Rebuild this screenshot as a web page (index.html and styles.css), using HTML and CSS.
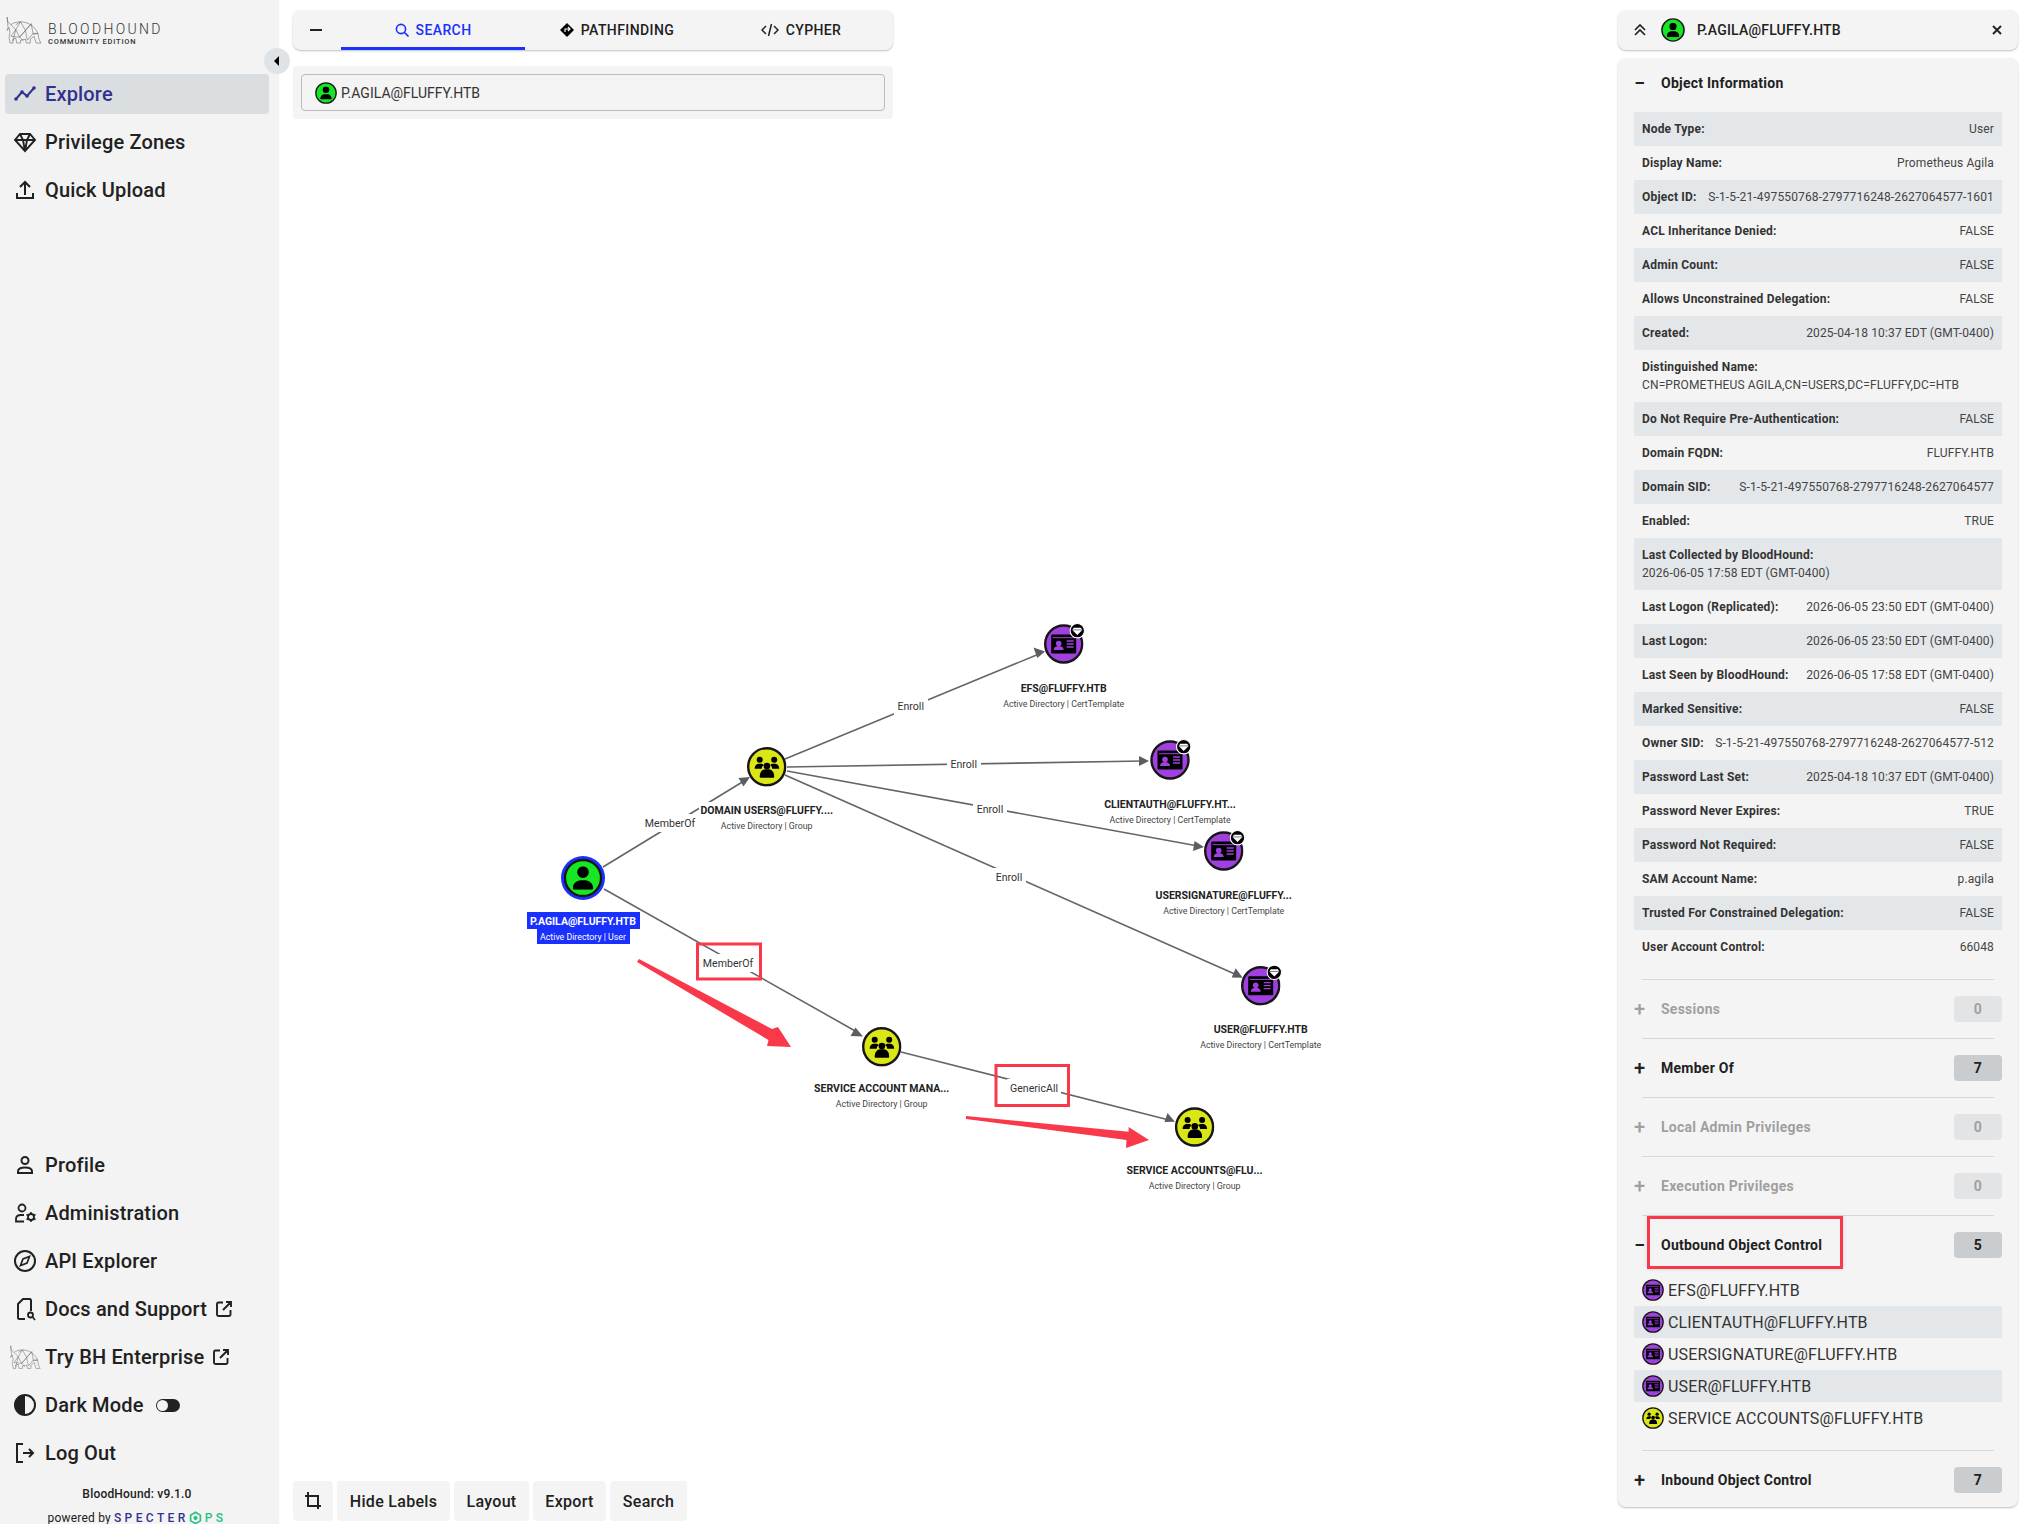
FILE: index.html
```html
<!DOCTYPE html>
<html lang="en">
<head>
    <meta charset="UTF-8">
    <title>BloodHound</title>
    <link rel="stylesheet" href="styles.css">
</head>
<body>
    <svg class="defs" width="0" height="0">
        <defs>
            <symbol id="dog" viewBox="0 0 38 28">
                <g fill="none" stroke="#5c5c5c" stroke-width=".55">
                    <path d="M2 0c0 4 1 6 4 8 2-2 6-3 10-3 8 0 15 5 18 12l1 6 2 4h-5l-2-7-4 3v4h-4l-1-4-5 1v3h-4l-1-5-3 1v4H5l-1-6 1-5-1-5-2 3 1-3z"/>
                    <path d="M6 8l5 5 5-8 5 9 6-7 2 11 5-1M11 13l-5 7 9 1 6-7 2 10 6-7M15 21l-4-8M16 5l-5 3M21 14l-6 7 4 4M27 7l-6 7M34 17l-5 0M8 25l3-12"/>
                </g>
            </symbol>
            <symbol id="person" viewBox="0 0 448 512">
                <path d="M224 256A128 128 0 1 0 224 0a128 128 0 1 0 0 256zm-45.7 48C79.8 304 0 383.8 0 482.3C0 498.7 13.3 512 29.7 512H418.3c16.4 0 29.7-13.3 29.7-29.7C448 383.8 368.2 304 269.7 304H178.3z"/>
            </symbol>
            <symbol id="node-user" viewBox="-20 -20 40 40">
                <circle r="18.5" fill="#17e625" stroke="#161616" stroke-width="2.4"/>
                <use href="#person" x="-10.5" y="-12" width="21" height="24"/>
            </symbol>
            <symbol id="node-group" viewBox="-20 -20 40 40">
                <circle r="18.5" fill="#dbe617" stroke="#161616" stroke-width="2.4"/>
                <circle cx="-7" cy="-7" r="3"/>
                <circle cx="7.5" cy="-7" r="3"/>
                <path d="M-12 2c0-3.500 2-5 4.500-5h2c1 0 2 .5 2.500 1.500-1.500 1-2 2-2 3.500zM12.500 2c0-3.500-2-5-4.500-5h-2c-1 0-2 .5-2.500 1.500 1.500 1 2 2 2 3.500z"/>
                <circle cx=".2" cy="-.6" r="3.300"/>
                <path d="M-7 10c0-5 2.500-7.500 6-7.500h2.500c3.500 0 6 2.500 6 7.500 0 .8-.5 1-1 1h-12.500c-.5 0-1-.2-1-1z"/>
            </symbol>
            <symbol id="node-cert" viewBox="-20 -20 40 40">
                <circle r="18.5" fill="#a040e0" stroke="#161616" stroke-width="2.400"/>
                <rect x="-12.500" y="-9.500" width="25" height="19" rx="1"/>
                <rect x="-11" y="-6.800" width="22" height="1" fill="#a040e0"/>
                <circle cx="-5" cy="-.5" r="2.800" fill="#a040e0"/>
                <path d="M-10 6c0-2.500 2-4 5-4s5 1.500 5 4z" fill="#a040e0"/>
                <path d="M3 -3h7M3 0h7M3 3h7" stroke="#a040e0" stroke-width="1.300"/>
            </symbol>
            <symbol id="gem-badge" viewBox="-8 -8 16 16">
                <circle r="7.200" fill="#000" stroke="#fff" stroke-width="1.100"/>
                <path d="M-3.500-3h7l1.500 2.200-5 5-5-5z" fill="#fff"/>
                <path d="M-5-.8h10" stroke="#000" stroke-width=".5"/>
            </symbol>
            <symbol id="ext" viewBox="0 0 18 18">
                <path d="M8 2.500H3.500a1.500 1.500 0 0 0-1.500 1.500v10.500a1.500 1.500 0 0 0 1.500 1.500H14a1.500 1.500 0 0 0 1.500-1.500V10M11 2h5v5M16 2l-8 8" fill="none" stroke="currentColor" stroke-width="1.900"/>
            </symbol>
        </defs>
    </svg>

    <div class="app">
        <aside class="sidebar">
            <div class="brand">
                <svg class="brand-dog"><use href="#dog"/></svg>
                <div>
                    <div class="brand-name">BLOODHOUND</div>
                    <div class="brand-sub">COMMUNITY EDITION</div>
                </div>
                <button class="collapse"><svg width="8" height="10" viewBox="0 0 8 10"><path d="M6 0v10L1 5z"/></svg></button>
            </div>
            <nav class="nav">
                <a class="nav-item active"><svg class="nav-icon" viewBox="0 0 24 24"><path d="M3 17l6-7 5 4 7-8" fill="none" stroke="currentColor" stroke-width="2"/><circle cx="3" cy="17" r="1.800" fill="currentColor"/><circle cx="9" cy="10" r="1.800" fill="currentColor"/><circle cx="14" cy="14" r="1.800" fill="currentColor"/><circle cx="21" cy="6" r="1.800" fill="currentColor"/></svg>Explore</a>
                <a class="nav-item"><svg class="nav-icon" viewBox="0 0 24 24"><path d="M7 4h10l5 6-10 11L2 10zM2 10h20M7 4l3 6 2 11 2-11 3-6" fill="none" stroke="currentColor" stroke-width="1.900"/></svg>Privilege Zones</a>
                <a class="nav-item"><svg class="nav-icon" viewBox="0 0 24 24"><path d="M12 17V5M7 9l5-5 5 5M4 15v5h16v-5" fill="none" stroke="currentColor" stroke-width="2"/></svg>Quick Upload</a>
            </nav>
            <nav class="nav nav-bottom">
                <a class="nav-item"><svg class="nav-icon" viewBox="0 0 24 24"><circle cx="12" cy="7.500" r="3.500" fill="none" stroke="currentColor" stroke-width="2"/><path d="M5 20v-1.500c0-2.500 3-4 7-4s7 1.500 7 4V20z" fill="none" stroke="currentColor" stroke-width="2"/></svg>Profile</a>
                <a class="nav-item"><svg class="nav-icon" viewBox="0 0 24 24"><circle cx="9" cy="7" r="3.500" fill="none" stroke="currentColor" stroke-width="1.800"/><path d="M11 14H8c-3 0-5 1.500-5 4v2.500h8" fill="none" stroke="currentColor" stroke-width="1.800"/><circle cx="18" cy="16" r="3" fill="none" stroke="currentColor" stroke-width="1.800"/><path d="M18 11v2M18 19v2M13.500 13.500l1.800 1M20.700 17.500l1.800 1M13.500 18.500l1.800-1M20.700 14.500l1.800-1" stroke="currentColor" stroke-width="1.500"/></svg>Administration</a>
                <a class="nav-item"><svg class="nav-icon" viewBox="0 0 24 24"><circle cx="12" cy="12" r="10" fill="none" stroke="currentColor" stroke-width="2"/><path d="M16.500 7.500l-2.500 6.500-6.500 2.500 2.500-6.500z" fill="none" stroke="currentColor" stroke-width="1.700"/></svg>API Explorer</a>
                <a class="nav-item"><svg class="nav-icon" viewBox="0 0 24 24"><path d="M12 22H6.500a1.500 1.500 0 0 1-1.500-1.500V7l5-5h6.500A1.500 1.500 0 0 1 18 3.500V14" fill="none" stroke="currentColor" stroke-width="2"/><circle cx="17.500" cy="18" r="2.500" fill="none" stroke="currentColor" stroke-width="1.800"/><path d="M19.500 20l2.500 3" stroke="currentColor" stroke-width="1.800"/></svg>Docs and Support<svg class="ext"><use href="#ext"/></svg></a>
                <a class="nav-item"><svg class="nav-dog"><use href="#dog"/></svg>Try BH Enterprise<svg class="ext"><use href="#ext"/></svg></a>
                <a class="nav-item"><svg class="nav-icon" viewBox="0 0 24 24"><circle cx="12" cy="12" r="10" fill="none" stroke="currentColor" stroke-width="2"/><path d="M12 2a10 10 0 0 0 0 20z" fill="currentColor"/></svg>Dark Mode<span class="toggle"></span></a>
                <a class="nav-item"><svg class="nav-icon" viewBox="0 0 24 24"><path d="M10 3H4v18h6M10 12h10M16 8l4 4-4 4" fill="none" stroke="currentColor" stroke-width="2"/></svg>Log Out</a>
            </nav>
            <footer class="side-footer">
                <div class="version">BloodHound: v9.1.0</div>
                <div class="powered">powered by <span class="specter">SPECTER</span><svg class="specter-mark" viewBox="0 0 16 16"><path d="M8 1l6 3.500v7L8 15l-6-3.500v-7z" fill="none" stroke="#1ec47e" stroke-width="2"/><circle cx="8" cy="8" r="2.500" fill="#1ec47e"/></svg><span class="ops">PS</span></div>
            </footer>
        </aside>

        <main class="main">
            <svg class="graph" width="1748" height="1524" viewBox="278 0 1748 1524">
                <g class="edges">
                    <path d="M603 867L744 781"/>
                    <path d="M604 889L857 1032"/>
                    <path d="M785 759L1039 654"/>
                    <path d="M787 767L1143 761"/>
                    <path d="M787 771L1198 846"/>
                    <path d="M785 775L1237 975"/>
                    <path d="M901 1052L1169 1120"/>
                </g>
                <g class="heads">
                    <path d="M750 777l-11.500 1 5 8.500z"/>
                    <path d="M863 1036.500l-7.500-9-5 8.500z"/>
                    <path d="M1045 651.500l-11.500-4 3.800 10.500z"/>
                    <path d="M1149 761l-10-5v10z"/>
                    <path d="M1204 847l-9.500-6-1.500 10z"/>
                    <path d="M1242.700 977.700l-7-9.500-4 9.200z"/>
                    <path d="M1175 1121.700l-7.500-8.700-3 9z"/>
                </g>

                <g class="edge-label">
                    <rect x="699" y="802" width="136" height="14"/>
                    <rect x="644" y="814" width="52" height="18"/><text x="670" y="827">MemberOf</text>
                    <rect x="702" y="954" width="52" height="18"/><text x="728" y="967">MemberOf</text>
                    <rect x="894" y="697" width="34" height="18"/><text x="910.700" y="710">Enroll</text>
                    <rect x="947" y="755" width="34" height="18"/><text x="963.700" y="768">Enroll</text>
                    <rect x="973" y="800" width="34" height="18"/><text x="990" y="813">Enroll</text>
                    <rect x="992" y="868" width="34" height="18"/><text x="1009" y="881">Enroll</text>
                    <rect x="1007" y="1079" width="54" height="18"/><text x="1034" y="1092">GenericAll</text>
                </g>

                <circle cx="583" cy="878" r="22" fill="#1a30ff"/>
                <use href="#node-user" x="563.500" y="858.500" width="39" height="39"/>
                <use href="#node-group" x="746.700" y="746.700" width="40" height="40"/>
                <use href="#node-group" x="861.700" y="1026.700" width="40" height="40"/>
                <use href="#node-group" x="1174.600" y="1107" width="40" height="40"/>
                <use href="#node-cert" x="1043.700" y="624" width="40" height="40"/>
                <use href="#node-cert" x="1150" y="740" width="40" height="40"/>
                <use href="#node-cert" x="1203.700" y="831" width="40" height="40"/>
                <use href="#node-cert" x="1240.700" y="965.700" width="40" height="40"/>
                <use href="#gem-badge" x="1069.300" y="622.700" width="16" height="16"/>
                <use href="#gem-badge" x="1175.700" y="738.700" width="16" height="16"/>
                <use href="#gem-badge" x="1229.500" y="829.700" width="16" height="16"/>
                <use href="#gem-badge" x="1266.300" y="964.300" width="16" height="16"/>

                <rect x="527" y="912" width="113" height="17" fill="#1a30ff"/>
                <rect x="537" y="929" width="93" height="15" fill="#1a30ff"/>
                <g class="node-name">
                    <text class="on-blue" x="583" y="925">P.AGILA@FLUFFY.HTB</text>
                    <text x="766.700" y="814">DOMAIN USERS@FLUFFY....</text>
                    <text x="1063.700" y="692">EFS@FLUFFY.HTB</text>
                    <text x="1170" y="808">CLIENTAUTH@FLUFFY.HT...</text>
                    <text x="1223.700" y="899">USERSIGNATURE@FLUFFY...</text>
                    <text x="1260.700" y="1033">USER@FLUFFY.HTB</text>
                    <text x="881.700" y="1092">SERVICE ACCOUNT MANA...</text>
                    <text x="1194.600" y="1174">SERVICE ACCOUNTS@FLU...</text>
                </g>
                <g class="node-kind">
                    <text class="on-blue" x="583" y="940">Active Directory | User</text>
                    <text x="766.700" y="829">Active Directory | Group</text>
                    <text x="1063.700" y="707">Active Directory | CertTemplate</text>
                    <text x="1170" y="823">Active Directory | CertTemplate</text>
                    <text x="1223.700" y="914">Active Directory | CertTemplate</text>
                    <text x="1260.700" y="1048">Active Directory | CertTemplate</text>
                    <text x="881.700" y="1107">Active Directory | Group</text>
                    <text x="1194.600" y="1189">Active Directory | Group</text>
                </g>

                <g class="annotations">
                    <rect x="697.500" y="944" width="63" height="35"/>
                    <rect x="996" y="1065.500" width="72.500" height="40"/>
                    <path class="red-arrow" d="M637 962l2-3 133 70 6-2 13 20-24-1 1.500-6z"/>
                    <path class="red-arrow" d="M966 1116l162.600 15.700v-4.700l20.400 13-23 8 .5-8-160.500-21z"/>
                </g>
            </svg>

            <section class="left-col">
                <div class="tabs">
                    <div class="tab-toggle"><svg width="12" height="12" viewBox="0 0 12 12"><path d="M0 6h12" stroke="#222" stroke-width="2"/></svg></div>
                    <div class="tab tab-active"><svg width="14" height="14" viewBox="0 0 14 14"><circle cx="6" cy="6" r="4.600" fill="none" stroke="currentColor" stroke-width="1.600"/><path d="M9.500 9.500l4 4" stroke="currentColor" stroke-width="1.600"/></svg>SEARCH</div>
                    <div class="tab"><svg width="14" height="14" viewBox="0 0 14 14"><path d="M7 0l7 7-7 7-7-7z"/><path d="M5 9V6h4M8 4l2 2-2 2" fill="none" stroke="#f4f4f4" stroke-width="1.200"/></svg>PATHFINDING</div>
                    <div class="tab"><svg width="18" height="14" viewBox="0 0 18 14"><path d="M5 3L1 7l4 4M13 3l4 4-4 4M10.500 1l-3 12" fill="none" stroke="currentColor" stroke-width="1.500"/></svg>CYPHER</div>
                </div>
                <div class="search-panel">
                    <div class="search-input"><svg class="avatar"><use href="#node-user"/></svg>P.AGILA@FLUFFY.HTB</div>
                </div>
                <div class="toolbar">
                    <button class="tool tool-icon"><svg width="18" height="18" viewBox="0 0 18 18"><path d="M1 4h13v13M4 0v14h13" fill="none" stroke="#222" stroke-width="2"/></svg></button>
                    <button class="tool hide-labels">Hide Labels</button>
                    <button class="tool layout-btn">Layout</button>
                    <button class="tool export-btn">Export</button>
                    <button class="tool search-btn">Search</button>
                </div>
            </section>

            <section class="right-col">
                <div class="entity-bar">
                    <svg class="chevrons" width="12" height="12" viewBox="0 0 12 12"><path d="M1 6l5-5 5 5M1 11l5-5 5 5" fill="none" stroke="#222" stroke-width="1.700"/></svg>
                    <svg class="entity-avatar"><use href="#node-user"/></svg>
                    <span class="entity-name">P.AGILA@FLUFFY.HTB</span>
                    <svg class="entity-close" width="10" height="10" viewBox="0 0 10 10"><path d="M1 1l8 8M9 1l-8 8" stroke="#222" stroke-width="1.900"/></svg>
                </div>
                <div class="info-panel">
                    <div class="info-head"><span class="sign">&minus;</span>Object Information</div>
                    <div class="rows">
                        <div class="row"><b>Node Type:</b><span>User</span></div>
                        <div class="row"><b>Display Name:</b><span>Prometheus Agila</span></div>
                        <div class="row"><b>Object ID:</b><span>S-1-5-21-497550768-2797716248-2627064577-1601</span></div>
                        <div class="row"><b>ACL Inheritance Denied:</b><span>FALSE</span></div>
                        <div class="row"><b>Admin Count:</b><span>FALSE</span></div>
                        <div class="row"><b>Allows Unconstrained Delegation:</b><span>FALSE</span></div>
                        <div class="row"><b>Created:</b><span>2025-04-18 10:37 EDT (GMT-0400)</span></div>
                        <div class="row stacked"><b>Distinguished Name:</b><span>CN=PROMETHEUS AGILA,CN=USERS,DC=FLUFFY,DC=HTB</span></div>
                        <div class="row"><b>Do Not Require Pre-Authentication:</b><span>FALSE</span></div>
                        <div class="row"><b>Domain FQDN:</b><span>FLUFFY.HTB</span></div>
                        <div class="row"><b>Domain SID:</b><span>S-1-5-21-497550768-2797716248-2627064577</span></div>
                        <div class="row"><b>Enabled:</b><span>TRUE</span></div>
                        <div class="row stacked"><b>Last Collected by BloodHound:</b><span>2026-06-05 17:58 EDT (GMT-0400)</span></div>
                        <div class="row"><b>Last Logon (Replicated):</b><span>2026-06-05 23:50 EDT (GMT-0400)</span></div>
                        <div class="row"><b>Last Logon:</b><span>2026-06-05 23:50 EDT (GMT-0400)</span></div>
                        <div class="row"><b>Last Seen by BloodHound:</b><span>2026-06-05 17:58 EDT (GMT-0400)</span></div>
                        <div class="row"><b>Marked Sensitive:</b><span>FALSE</span></div>
                        <div class="row"><b>Owner SID:</b><span>S-1-5-21-497550768-2797716248-2627064577-512</span></div>
                        <div class="row"><b>Password Last Set:</b><span>2025-04-18 10:37 EDT (GMT-0400)</span></div>
                        <div class="row"><b>Password Never Expires:</b><span>TRUE</span></div>
                        <div class="row"><b>Password Not Required:</b><span>FALSE</span></div>
                        <div class="row"><b>SAM Account Name:</b><span>p.agila</span></div>
                        <div class="row"><b>Trusted For Constrained Delegation:</b><span>FALSE</span></div>
                        <div class="row"><b>User Account Control:</b><span>66048</span></div>
                    </div>

                    <div class="acc disabled"><span class="sign">+</span><span class="acc-title">Sessions</span><span class="count">0</span></div>
                    <div class="acc"><span class="sign">+</span><span class="acc-title">Member Of</span><span class="count">7</span></div>
                    <div class="acc disabled"><span class="sign">+</span><span class="acc-title">Local Admin Privileges</span><span class="count">0</span></div>
                    <div class="acc disabled"><span class="sign">+</span><span class="acc-title">Execution Privileges</span><span class="count">0</span></div>
                    <div class="acc"><span class="sign">&minus;</span><span class="acc-title">Outbound Object Control</span><span class="count">5</span><span class="callout"></span></div>
                    <div class="obj-list">
                        <div class="obj"><svg class="avatar"><use href="#node-cert"/></svg>EFS@FLUFFY.HTB</div>
                        <div class="obj"><svg class="avatar"><use href="#node-cert"/></svg>CLIENTAUTH@FLUFFY.HTB</div>
                        <div class="obj"><svg class="avatar"><use href="#node-cert"/></svg>USERSIGNATURE@FLUFFY.HTB</div>
                        <div class="obj"><svg class="avatar"><use href="#node-cert"/></svg>USER@FLUFFY.HTB</div>
                        <div class="obj"><svg class="avatar"><use href="#node-group"/></svg>SERVICE ACCOUNTS@FLUFFY.HTB</div>
                    </div>
                    <div class="acc"><span class="sign">+</span><span class="acc-title">Inbound Object Control</span><span class="count">7</span></div>
                </div>
            </section>
        </main>
    </div>
</body>
</html>
```

FILE: styles.css
```css
* {
    box-sizing: border-box;
}
body {
    margin: 0;
    background-color: #fff;
    color: #212121;
    font-family: Roboto, "Liberation Sans", sans-serif;
}
.defs {
    position: absolute;
}
.app {
    display: grid;
    grid-template-columns: 278px 1fr;
    height: 1524px;
    overflow: hidden;
}

/* sidebar */
.sidebar {
    display: flex;
    flex-direction: column;
    background-color: #f3f3f3;
    padding: 0 9px 0 5px;
    box-shadow: 1px 0 1px rgba(0, 0, 0, .05);
    position: relative;
    z-index: 2;
}
.brand {
    display: flex;
    align-items: flex-start;
    gap: 6px;
    height: 74px;
    padding-top: 17px;
}
.brand-dog {
    width: 37px;
    height: 27px;
}
.brand-name {
    font-size: 14px;
    font-weight: 300;
    letter-spacing: 2.35px;
    line-height: 20px;
    margin-top: 2px;
    color: #333;
}
.brand-sub {
    font-size: 7.5px;
    font-weight: 500;
    letter-spacing: .8px;
    line-height: 10px;
    margin-top: -2px;
    color: #333;
}
.collapse {
    position: absolute;
    left: 264px;
    top: 48px;
    width: 26px;
    height: 26px;
    padding: 0;
    border: 0;
    border-radius: 50%;
    background-color: #dfe3e6;
    display: flex;
    align-items: center;
    justify-content: center;
}
.nav {
    display: flex;
    flex-direction: column;
    gap: 8px;
}
.nav-bottom {
    margin-top: auto;
}
.nav-item {
    display: flex;
    align-items: center;
    height: 40px;
    padding-left: 8px;
    border-radius: 4px;
    font-size: 20px;
    font-weight: 500;
    letter-spacing: .16px;
    color: #212121;
}
.nav-item.active {
    background-color: #dadee1;
    color: #33318f;
}
.nav-icon {
    width: 24px;
    height: 24px;
    margin-right: 8px;
    flex: none;
}
.nav-dog {
    width: 32px;
    height: 25px;
    margin: 0 4px 0 -4px;
    flex: none;
}
.ext {
    width: 18px;
    height: 18px;
    margin-left: 8px;
}
.toggle {
    width: 24px;
    height: 13px;
    margin-left: 12px;
    border-radius: 7px;
    background-color: #222;
    position: relative;
}
.toggle::before {
    content: "";
    position: absolute;
    left: 1px;
    top: 1px;
    width: 11px;
    height: 11px;
    border-radius: 50%;
    background-color: #f3f3f3;
}
.side-footer {
    height: 51px;
    text-align: center;
    font-size: 12px;
    letter-spacing: .2px;
}
.version {
    font-weight: 500;
    line-height: 16px;
    margin-top: 13px;
}
.powered {
    display: flex;
    justify-content: center;
    align-items: center;
    gap: 3px;
    line-height: 16px;
    margin-top: 8px;
}
.specter {
    color: #33318f;
    font-weight: 500;
    letter-spacing: 3.4px;
}
.ops {
    color: #1ec47e;
    font-weight: 500;
    letter-spacing: 3.4px;
}
.specter-mark {
    width: 13px;
    height: 16px;
    margin-left: -3px;
}

/* main area */
.main {
    position: relative;
    display: flex;
    justify-content: space-between;
    padding: 10px 8px 3px 15px;
}
.graph {
    position: absolute;
    left: 0;
    top: 0;
}
.left-col {
    position: relative;
    width: 600px;
    display: flex;
    flex-direction: column;
}
.tabs {
    display: flex;
    height: 40px;
    background-color: #f4f4f4;
    border-radius: 8px;
    box-shadow: 0 1px 2px rgba(0, 0, 0, .25);
}
.tab-toggle {
    width: 48px;
    display: flex;
    align-items: center;
    padding-left: 17px;
}
.tab {
    width: 184px;
    display: flex;
    align-items: center;
    justify-content: center;
    gap: 7px;
    font-size: 14px;
    font-weight: 500;
    letter-spacing: .4px;
    padding-bottom: 1px;
}
.tab-active {
    color: #1a30ff;
    border-bottom: 3px solid #1a30ff;
    padding: 2px 0 0;
}
.search-panel {
    margin-top: 16px;
    padding: 8px;
    background-color: #f4f4f4;
    border-radius: 4px;
}
.search-input {
    display: flex;
    align-items: center;
    gap: 4px;
    height: 37px;
    padding-left: 13px;
    border: 1px solid #bbb;
    border-radius: 4px;
    font-size: 14px;
    color: #333;
}
.avatar {
    width: 22px;
    height: 22px;
    flex: none;
}
.toolbar {
    display: flex;
    gap: 4px;
    margin-top: auto;
    height: 40px;
}
.tool {
    height: 40px;
    padding: 0;
    border: 0;
    border-radius: 4px;
    background-color: #f4f4f4;
    font-family: inherit;
    font-size: 16px;
    font-weight: 500;
    letter-spacing: .3px;
    color: #212121;
}
.tool-icon {
    width: 40px;
    display: flex;
    align-items: center;
    justify-content: center;
}
.hide-labels { width: 113px; }
.layout-btn { width: 75px; }
.export-btn { width: 73px; }
.search-btn { width: 77px; }

/* entity panel */
.right-col {
    position: relative;
    width: 400px;
}
.entity-bar {
    display: flex;
    align-items: center;
    height: 40px;
    padding: 0 16px;
    background-color: #f4f4f4;
    border-radius: 8px;
    box-shadow: 0 1px 2px rgba(0, 0, 0, .25);
}
.entity-avatar {
    width: 24px;
    height: 24px;
    margin-left: 15px;
}
.entity-name {
    margin-left: 12px;
    font-size: 14px;
    font-weight: 500;
    letter-spacing: .2px;
}
.entity-close {
    margin-left: auto;
}
.info-panel {
    margin-top: 8px;
    height: 1449px;
    padding: 0 16px;
    overflow: hidden;
    background-color: #f4f4f4;
    border-radius: 8px;
    box-shadow: 0 1px 2px rgba(0, 0, 0, .25);
}
.info-head {
    display: flex;
    align-items: center;
    height: 50px;
    margin-bottom: 4px;
    font-size: 14px;
    font-weight: 700;
    letter-spacing: .25px;
}
.sign {
    width: 27px;
    flex: none;
    font-size: 20px;
    font-weight: 500;
    line-height: 20px;
}
.row {
    display: flex;
    justify-content: space-between;
    align-items: center;
    min-height: 34px;
    padding: 0 8px;
    font-size: 12px;
    letter-spacing: .13px;
    color: #444;
}
.row:nth-child(odd) {
    background-color: #e3e7ea;
}
.row b {
    font-weight: 700;
    letter-spacing: .2px;
    color: #333;
}
.row.stacked {
    display: block;
    padding: 8px;
    line-height: 18px;
    min-height: 52px;
}
.row.stacked b,
.row.stacked span {
    display: block;
}
.rows {
    margin-bottom: 15px;
    border-bottom: 0;
}
.acc {
    position: relative;
    display: flex;
    align-items: center;
    height: 59px;
    font-size: 14px;
    font-weight: 700;
    letter-spacing: .25px;
}
.acc::before {
    content: "";
    position: absolute;
    left: 8px;
    right: 8px;
    top: 0;
    height: 1px;
    background-color: #d6d8da;
}
.acc.disabled .sign,
.acc.disabled .acc-title,
.acc.disabled .count {
    opacity: .4;
}
.count {
    margin-left: auto;
    width: 48px;
    height: 26px;
    border-radius: 4px;
    background-color: #c9cdd0;
    text-align: center;
    font-size: 14px;
    line-height: 26px;
}
.acc.disabled .count {
    background-color: #c9cdd0;
    color: #212121;
}
.callout {
    position: absolute;
    left: 13px;
    top: 1px;
    width: 196px;
    height: 53px;
    border: 3px solid #f9384a;
    box-shadow: 0 0 4px rgba(0, 0, 0, .12);
}
.obj-list {
    padding-bottom: 16px;
}
.obj {
    display: flex;
    align-items: center;
    gap: 4px;
    height: 32px;
    padding-left: 8px;
    font-size: 16px;
    letter-spacing: .15px;
    color: #333;
}
.obj:nth-child(even) {
    background-color: #e3e7ea;
}

/* graph */
.edges path {
    stroke: #636569;
    stroke-width: 1.6;
    fill: none;
}
.heads path {
    fill: #5b5d61;
}
.edge-label rect {
    fill: #fff;
}
.edge-label text {
    font-size: 10.6px;
    fill: #333;
    text-anchor: middle;
    transform: translateY(-.5px);
}
.node-name text {
    font-size: 10.5px;
    font-weight: 700;
    fill: #222;
    text-anchor: middle;
    transform: translateY(-.5px);
}
.node-kind text {
    font-size: 8.8px;
    fill: #444;
    text-anchor: middle;
    transform: translateY(-.5px);
}
.node-name .on-blue,
.node-kind .on-blue {
    fill: #fff;
}
.annotations rect {
    fill: none;
    stroke: #f9384a;
    stroke-width: 3;
}
.annotations .red-arrow {
    fill: #f9384a;
    stroke: none;
}
```
